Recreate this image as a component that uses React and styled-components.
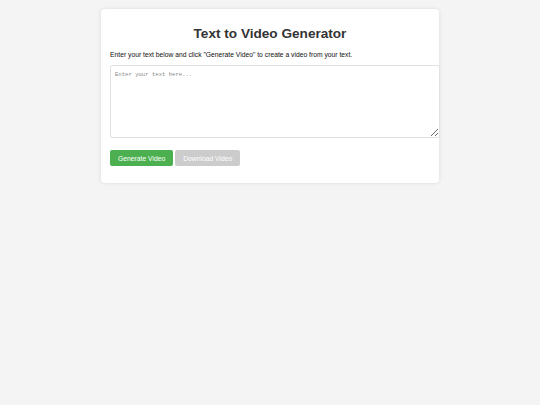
import React from 'react';
import styled, { createGlobalStyle } from 'styled-components';

const GlobalStyle = createGlobalStyle`
  body {
    margin: 0;
    background-color: #f4f4f4;
    font-family: "Liberation Sans", Arial, sans-serif;
  }
`;

const Page = styled.div`
  padding: 9px 0;
`;

const Card = styled.div`
  width: 320px;
  margin: 0 auto;
  padding: 8px 9px 17px;
  background-color: #ffffff;
  border-radius: 4px;
  box-shadow: 0 0 4px rgba(0, 0, 0, 0.1);
`;

const Title = styled.h1`
  font-size: 13.6px;
  color: #333;
  text-align: center;
  margin: 9px 0 10px;
`;

const Description = styled.p`
  font-size: 6.75px;
  color: #111;
  margin: 0 0 7px;
`;

const TextArea = styled.textarea`
  display: block;
  width: 100%;
  height: 62px;
  padding: 5px 4px 4px;
  border: 1px solid #e2e2e2;
  border-radius: 2px;
  font-family: "Liberation Mono", monospace;
  font-size: 5.6px;
  margin-bottom: 12px;
  box-sizing: content-box;

  &::placeholder {
    color: #888;
  }
`;

const Buttons = styled.div`
  display: flex;
  gap: 2px;
`;

const Button = styled.button`
  height: 16px;
  padding: 0 8px;
  border: none;
  border-radius: 2px;
  font-family: "Liberation Sans", Arial, sans-serif;
  font-size: 6.75px;
  color: #fff;
  background-color: ${(p) => (p.$disabled ? '#cccccc' : '#4caf50')};
  cursor: ${(p) => (p.$disabled ? 'not-allowed' : 'pointer')};
`;

const App = () => {
  return (
    <>
      <GlobalStyle />
      <Page>
        <Card>
          <Title>Text to Video Generator</Title>
          <Description>
            Enter your text below and click "Generate Video" to create a video from your text.
          </Description>
          <TextArea placeholder="Enter your text here..." />
          <Buttons>
            <Button>Generate Video</Button>
            <Button $disabled disabled>Download Video</Button>
          </Buttons>
        </Card>
      </Page>
    </>
  );
};

export default App;
